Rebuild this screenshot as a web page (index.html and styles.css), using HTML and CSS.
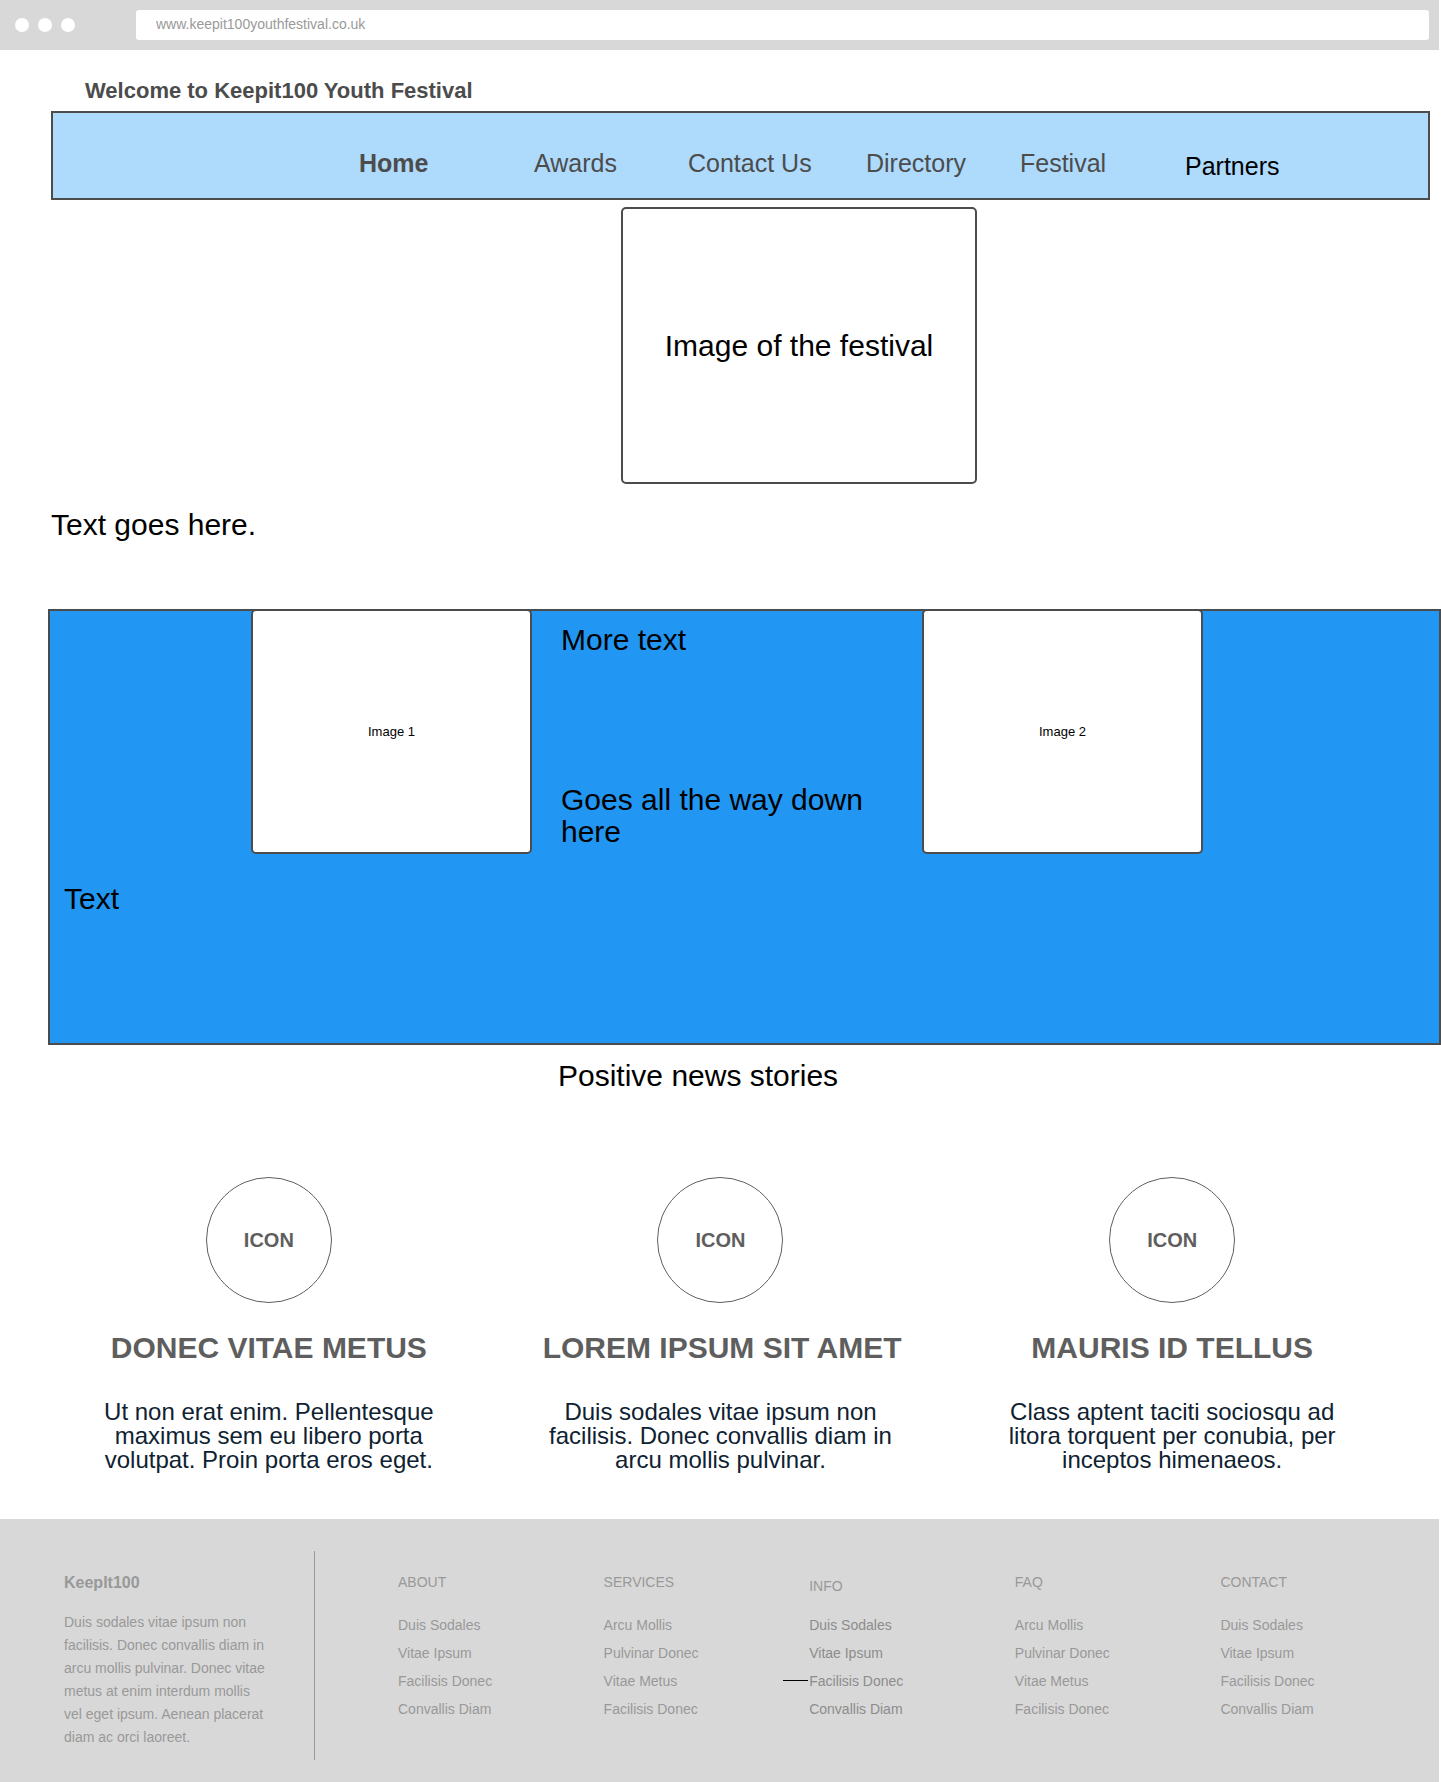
FILE: index.html
```html
<!DOCTYPE html>
<html lang="en">
<head>
<meta charset="utf-8">
<meta name="viewport" content="width=device-width, initial-scale=1">
<title>Keepit100 Youth Festival</title>
<link rel="stylesheet" href="styles.css">
</head>
<body>
<div class="browser-bar">
  <div class="dots"><span class="dot"></span><span class="dot"></span><span class="dot"></span></div>
  <input class="address" type="text" aria-label="Address" value="www.keepit100youthfestival.co.uk">
</div>

<header class="site-header">
  <h1 class="site-title">Welcome to Keepit100 Youth Festival</h1>
  <nav class="site-nav">
    <a class="nav-link current" href="#">Home</a>
    <a class="nav-link" href="#">Awards</a>
    <a class="nav-link" href="#">Contact Us</a>
    <a class="nav-link" href="#">Directory</a>
    <a class="nav-link" href="#">Festival</a>
    <a class="nav-link partners" href="#">Partners</a>
  </nav>
</header>

<main>
  <div class="hero">
    <div class="frame hero-frame">Image of the festival</div>
  </div>
  <p class="intro">Text goes here.</p>

  <section class="feature">
    <div class="feature-row">
      <div class="frame image-one">Image 1</div>
      <div class="feature-copy">
        <p>More text</p>
        <p>Goes all the way down here</p>
      </div>
      <div class="frame image-two">Image 2</div>
    </div>
    <p class="feature-text">Text</p>
  </section>

  <div class="news-heading"><h2>Positive news stories</h2></div>
  <section class="stories">
    <article class="story">
      <div class="story-icon">ICON</div>
      <h3>DONEC VITAE METUS</h3>
      <p>Ut non erat enim. Pellentesque maximus sem eu libero porta volutpat. Proin porta eros eget.</p>
    </article>
    <article class="story">
      <div class="story-icon">ICON</div>
      <h3>LOREM IPSUM SIT AMET</h3>
      <p>Duis sodales vitae ipsum non facilisis. Donec convallis diam in arcu mollis pulvinar.</p>
    </article>
    <article class="story">
      <div class="story-icon">ICON</div>
      <h3>MAURIS ID TELLUS</h3>
      <p>Class aptent taciti sociosqu ad litora torquent per conubia, per inceptos himenaeos.</p>
    </article>
  </section>
</main>

<footer class="site-footer">
  <div class="brand">
    <h2>KeepIt100</h2>
    <p>Duis sodales vitae ipsum non facilisis. Donec convallis diam in arcu mollis pulvinar. Donec vitae metus at enim interdum mollis vel eget ipsum. Aenean placerat diam ac orci laoreet.</p>
  </div>
  <div class="link-columns">
    <div class="link-column">
      <h3>ABOUT</h3>
      <ul>
        <li><a href="#">Duis Sodales</a></li>
        <li><a href="#">Vitae Ipsum</a></li>
        <li><a href="#">Facilisis Donec</a></li>
        <li><a href="#">Convallis Diam</a></li>
      </ul>
    </div>
    <div class="link-column">
      <h3>SERVICES</h3>
      <ul>
        <li><a href="#">Arcu Mollis</a></li>
        <li><a href="#">Pulvinar Donec</a></li>
        <li><a href="#">Vitae Metus</a></li>
        <li><a href="#">Facilisis Donec</a></li>
      </ul>
    </div>
    <div class="link-column info">
      <h3>INFO</h3>
      <ul>
        <li><a href="#">Duis Sodales</a></li>
        <li><a href="#">Vitae Ipsum</a></li>
        <li class="marked"><a href="#">Facilisis Donec</a></li>
        <li><a href="#">Convallis Diam</a></li>
      </ul>
    </div>
    <div class="link-column">
      <h3>FAQ</h3>
      <ul>
        <li><a href="#">Arcu Mollis</a></li>
        <li><a href="#">Pulvinar Donec</a></li>
        <li><a href="#">Vitae Metus</a></li>
        <li><a href="#">Facilisis Donec</a></li>
      </ul>
    </div>
    <div class="link-column">
      <h3>CONTACT</h3>
      <ul>
        <li><a href="#">Duis Sodales</a></li>
        <li><a href="#">Vitae Ipsum</a></li>
        <li><a href="#">Facilisis Donec</a></li>
        <li><a href="#">Convallis Diam</a></li>
      </ul>
    </div>
  </div>
</footer>
</body>
</html>
```
FILE: styles.css
```css
* {
  box-sizing: border-box;
}

body {
  margin: 0;
  background: #fff;
  color: #000;
  font-family: "Liberation Sans", Arial, sans-serif;
  font-size: 30px;
  line-height: 32px;
}

h1, h2, h3, p, ul {
  margin: 0;
  padding: 0;
  font-weight: 400;
}

ul {
  list-style: none;
}

a {
  color: inherit;
  text-decoration: none;
}

/* Browser bar */
.browser-bar {
  display: flex;
  align-items: center;
  gap: 61px;
  margin-right: 2px;
  padding: 10px 10px 10px 15px;
  background: #d8d8d8;
}

.dots {
  display: flex;
  gap: 9px;
}

.dot {
  width: 14px;
  height: 14px;
  border-radius: 50%;
  background: #fff;
}

.address {
  flex: 1;
  min-width: 0;
  height: 30px;
  padding: 0 20px 2px;
  border: 0;
  border-radius: 3px;
  background: #fff;
  color: #999;
  font: 14px/28px "Liberation Sans", Arial, sans-serif;
}

/* Header */
.site-header {
  padding: 27px 11px 0 51px;
}

.site-title {
  margin: 0 0 6px 34px;
  color: #4c4c4c;
  font-size: 22px;
  font-weight: 700;
  line-height: 28px;
}

.site-nav {
  display: grid;
  grid-template-columns: 306fr 175fr 154fr 178fr 154fr 165fr 243fr;
  grid-template-rows: 31px;
  align-items: start;
  padding: 36px 0 18px;
  border: 2px solid #4c4c4c;
  background: #aedafc;
}

.nav-link {
  color: #4c4c4c;
  font-size: 25px;
  line-height: 28px;
  white-space: nowrap;
}

.current {
  grid-column: 2;
  font-weight: 700;
}

.partners {
  align-self: end;
  color: #000;
}

/* Placeholder frames */
.frame {
  display: flex;
  align-items: center;
  justify-content: center;
  border: 2px solid #4c4c4c;
  border-radius: 5px;
  background: #fff;
}

.hero {
  display: grid;
  grid-template-columns: 621fr 356fr 464fr;
  padding-top: 7px;
}

.hero-frame {
  grid-column: 2;
  height: 277px;
}

.intro {
  padding: 25px 51px 68px;
}

/* Feature band */
.feature {
  margin-left: 48px;
  padding-bottom: 128px;
  border: 2px solid #4c4c4c;
  background: #2196f3;
}

.feature-row {
  display: grid;
  grid-template-columns: 201fr 281fr 390fr 281fr 236fr;
  min-height: 245px;
  margin-top: -2px;
}

.image-one,
.image-two {
  font-size: 13px;
}

.image-one {
  grid-column: 2;
}

.feature-copy {
  display: flex;
  flex-direction: column;
  justify-content: space-between;
  padding: 15px 28px 6px 29px;
}

.feature-text {
  padding: 29px 14px 0;
}

/* News stories */
.news-heading {
  display: grid;
  grid-template-columns: 558fr 883fr;
  padding-top: 15px;
}

.news-heading h2 {
  grid-column: 2;
  font-size: 30px;
}

.stories {
  display: grid;
  grid-template-columns: repeat(3, minmax(0, 1fr));
  gap: 96px;
  padding: 85px 91px 47px;
  text-align: center;
}

.story-icon {
  display: flex;
  align-items: center;
  justify-content: center;
  width: 126px;
  height: 126px;
  margin: 0 auto 29px;
  border: 1px solid #5e5e5e;
  border-radius: 50%;
  color: #5e5e5e;
  font-size: 20px;
  font-weight: 700;
}

.story h3 {
  margin-bottom: 36px;
  color: #5e5e5e;
  font-size: 30px;
  font-weight: 700;
  white-space: nowrap;
}

.story p {
  color: #0f2231;
  font-size: 24px;
  line-height: 24px;
}

/* Footer */
.site-footer {
  display: grid;
  grid-template-columns: 251px 1fr;
  column-gap: 83px;
  margin-right: 2px;
  padding: 32px 13px 22px 64px;
  background: #d8d8d8;
  color: #999;
  font-size: 14px;
}

.brand {
  min-height: 209px;
  padding: 20px 46px 0 0;
  border-right: 1px solid #999;
  line-height: 23px;
}

.brand h2 {
  margin-bottom: 16px;
  font-size: 16px;
  font-weight: 700;
  line-height: 24px;
}

.link-columns {
  display: grid;
  grid-template-columns: repeat(5, 1fr);
  padding-top: 19px;
}

.link-column h3 {
  display: flex;
  height: 28px;
  margin-bottom: 13px;
  font-size: 14px;
  line-height: 24px;
}

.info h3 {
  align-items: flex-end;
}

.link-column li {
  line-height: 28px;
}

.info li {
  color: #8c8c8c;
}

.marked {
  position: relative;
}

.marked::before {
  content: "";
  position: absolute;
  top: 13px;
  right: 100%;
  width: 25px;
  height: 1px;
  margin-right: 1px;
  background: #000;
}
```
